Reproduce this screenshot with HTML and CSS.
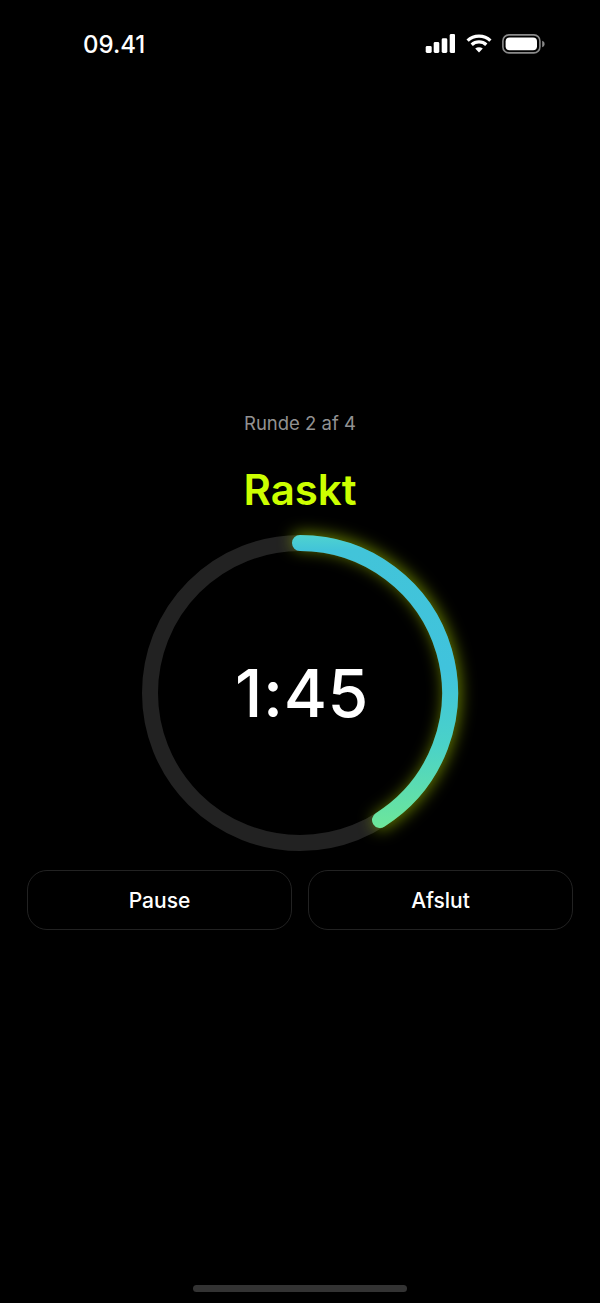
FILE: index.html
```html
<!DOCTYPE html>
<html lang="da">
<head>
<meta charset="utf-8">
<title>Raskt</title>
<link rel="stylesheet" href="styles.css">
</head>
<body>
<div class="screen">
  <header class="status">
    <span class="time">09.41</span>
    <div class="status-icons">
      <svg class="signal" width="30" height="19" viewBox="0 0 30 19" fill="#fff">
        <rect x="0.7" y="12" width="6" height="7" rx="1.4"/>
        <rect x="8.7" y="8" width="5.6" height="11" rx="1.4"/>
        <rect x="16.7" y="4.3" width="5.6" height="14.7" rx="1.4"/>
        <rect x="24.7" y="0" width="5.6" height="19" rx="1.4"/>
      </svg>
      <svg class="wifi" width="26" height="19" viewBox="0 0 26 19" fill="none" stroke="#fff" stroke-width="3.3">
        <path d="M1.6 6.6C7.8 .7 18.2 .7 24.4 6.6"/>
        <path d="M5.7 10.8C9.8 7 16.2 7 20.3 10.8"/>
        <path d="M13 18.6L9.2 14.6C11.4 12.9 14.6 12.9 16.8 14.6Z" fill="#fff" stroke="none"/>
      </svg>
      <svg class="battery" width="43" height="20" viewBox="0 0 43 20" fill="none">
        <rect x="0.9" y="0.9" width="37" height="18" rx="6" stroke="#8a8a8a" stroke-width="1.6"/>
        <rect x="3.6" y="3.5" width="31.4" height="12.8" rx="4" fill="#fff"/>
        <path d="M40.2 6.8c1.5.4 2.4 1.6 2.4 3.2s-.9 2.800-2.400 3.200z" fill="#8a8a8a"/>
      </svg>
    </div>
  </header>

  <main class="workout">
    <p class="round">Runde 2 af 4</p>
    <h1 class="phase">Raskt</h1>
    <div class="ring">
      <svg class="ring-svg" width="360" height="360" viewBox="0 0 360 360" fill="none">
        <defs>
          <linearGradient id="arc" gradientUnits="userSpaceOnUse" x1="0" y1="22" x2="0" y2="322">
            <stop offset="0" stop-color="#4fd3cf"/>
            <stop offset="0.05" stop-color="#42c4d9"/>
            <stop offset="0.45" stop-color="#40c3dc"/>
            <stop offset="0.7" stop-color="#4ad2c8"/>
            <stop offset="1" stop-color="#70e896"/>
          </linearGradient>
        </defs>
        <circle class="ring-track" cx="180" cy="180" r="150"/>
        <path class="ring-glow" d="M180 28A152 152 0 0 1 261 308.600"/>
        <path class="ring-arc" d="M180 30A150 150 0 0 1 260 306.900" stroke="url(#arc)"/>
      </svg>
      <span class="clock">1:45</span>
    </div>
    <div class="actions">
      <button class="btn" type="button">Pause</button>
      <button class="btn" type="button">Afslut</button>
    </div>
  </main>

  <div class="home-bar"></div>
</div>
</body>
</html>
```

FILE: styles.css
```css
* { box-sizing: border-box; }
html, body { margin: 0; padding: 0; background: #000; }
body { font-family: Inter, "Liberation Sans", sans-serif; color: #fff; }
.screen {
  width: 600px;
  height: 1303px;
  display: flex;
  flex-direction: column;
  background: #000;
  overflow: hidden;
}
.status {
  height: 88px;
  padding: 30px 55px 0 83px;
  display: flex;
  justify-content: space-between;
  align-items: flex-start;
}
.time {
  font-size: 24px;
  font-weight: 500;
  line-height: 29px;
}
.status-icons {
  display: flex;
  align-items: flex-start;
  padding-top: 4px;
}
.signal { margin-right: 11px; }
.wifi { margin-right: 10px; }
.workout {
  flex: 1;
  padding-top: 324px;
  display: flex;
  flex-direction: column;
  align-items: center;
}
.round {
  margin: 0;
  font-size: 18.5px;
  line-height: 22px;
  color: #929292;
}
.phase {
  margin: 31px 0 0;
  font-size: 42px;
  line-height: 50px;
  font-weight: 600;
  color: #ccff00;
}
.ring {
  position: relative;
  width: 360px;
  height: 360px;
  margin-top: -2px;
  margin-bottom: -3px;
  flex: none;
  display: flex;
  align-items: center;
  justify-content: center;
}
.ring-svg { position: absolute; inset: 0; overflow: visible; }
.ring-track { stroke: #222; stroke-width: 16; }
.ring-arc { stroke-width: 16; stroke-linecap: round; }
.ring-glow {
  stroke: #c4f000;
  stroke-opacity: 0.55;
  stroke-width: 16;
  stroke-linecap: round;
  filter: blur(8px);
}
.clock {
  position: relative;
  font-size: 66px;
  font-weight: 530;
  line-height: 76px;
  letter-spacing: 0.6px;
  padding-left: 4px;
}
.actions {
  width: 100%;
  padding: 0 27px;
  display: flex;
  gap: 16px;
}
.btn {
  flex: 1;
  height: 60px;
  border: 1px solid #222;
  border-radius: 20px;
  background: #000;
  color: #fff;
  font-family: inherit;
  font-size: 21px;
  font-weight: 550;
  padding: 0;
}
.home-bar {
  flex: none;
  width: 214px;
  height: 7px;
  margin: 0 auto 11px;
  border-radius: 4px;
  background: #333;
}
```
